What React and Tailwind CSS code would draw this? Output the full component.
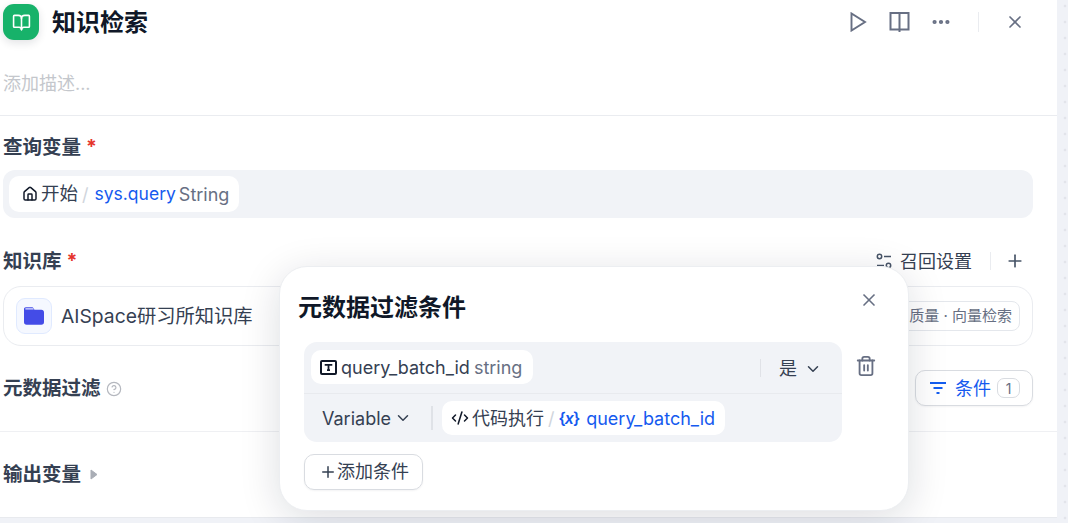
import React from 'react';
import { Ellipsis, X, House, Plus, ChevronDown, Trash2, CodeXml, CircleHelp, BookOpen } from 'lucide-react';

const font = { fontFamily: '"Inter","Noto Sans CJK SC",sans-serif' };

function Req() {
  return <span className="text-[#e5342b] ml-[5px]">*</span>;
}

function PlayIcon() {
  return (
    <svg width="20" height="20" viewBox="0 0 20 20" fill="none" className="shrink-0">
      <path d="M3.5 1.5v17L17 10z" stroke="#676f83" strokeWidth="1.9" strokeLinejoin="miter" />
    </svg>
  );
}

function DocIcon() {
  return (
    <svg width="23" height="22" viewBox="0 0 23 22" fill="none" className="shrink-0">
      <rect x="2.5" y="2" width="18" height="16.5" stroke="#676f83" strokeWidth="2" />
      <path d="M11.5 1v20" stroke="#676f83" strokeWidth="2" />
    </svg>
  );
}

function TextBoxIcon() {
  return (
    <svg width="17" height="15" viewBox="0 0 17 15" fill="none" className="shrink-0">
      <rect x="1" y="1" width="15" height="13" rx="1" stroke="#101828" strokeWidth="2" />
      <path d="M4.7 4.8h7.6M8.5 4.8v5.4M7 10.2h3" stroke="#101828" strokeWidth="1.8" />
    </svg>
  );
}

function RecallIcon() {
  return (
    <svg width="16" height="16" viewBox="0 0 16 16" fill="none" className="shrink-0">
      <circle cx="3.5" cy="3.5" r="2.2" stroke="#475467" strokeWidth="1.5" />
      <path d="M8 3.5h7M1 12.5h7" stroke="#475467" strokeWidth="1.7" />
      <circle cx="12.5" cy="12.5" r="2.2" stroke="#475467" strokeWidth="1.5" />
    </svg>
  );
}

function FolderIcon() {
  return (
    <svg width="22" height="20" viewBox="0 0 24 22" fill="none">
      <path d="M3 1.5h6.5c1 0 1.7.5 2.2 1.3l.8 1.4H20c2 0 3 1 3 3v10.3c0 2-1 3-3 3H4c-2 0-3-1-3-3V3.5c0-1.2.8-2 2-2z" fill="#444ce7" />
      <path d="M3 3.2h8" stroke="#dfe3ff" strokeWidth="1.3" strokeLinecap="round" />
    </svg>
  );
}

function FilterIcon() {
  return (
    <svg width="18" height="14" viewBox="0 0 18 14" fill="none" className="shrink-0">
      <path d="M1 2h16M4.5 7h9M7.5 12h3" stroke="#155eef" strokeWidth="2" />
    </svg>
  );
}

export default function App() {
  return (
    <div style={font} className="relative w-[1068px] h-[523px] overflow-hidden flex bg-[#f0f2f7]">
      <div className="w-[1057px] h-[518px] bg-white border-b border-[#e8eaee] flex flex-col shrink-0">
        <div className="h-[116px] border-b border-[#eaecf0] pl-[3px] pr-[32px] pt-[4px] shrink-0">
          <div className="flex items-center h-[36px]">
            <div className="w-[36px] h-[36px] rounded-[11px] bg-[#17b26a] flex items-center justify-center shadow-[0_3px_8px_rgba(16,24,40,0.12)]">
              <BookOpen size={19} color="white" strokeWidth={2} />
            </div>
            <div className="ml-[13px] mt-[2px] text-[24px] leading-[40px] font-bold text-[#101828]">知识检索</div>
            <div className="ml-auto flex items-center text-[#676f83]">
              <PlayIcon />
              <div className="ml-[20px]"><DocIcon /></div>
              <Ellipsis size={22} strokeWidth={2.6} className="ml-[19px]" />
              <div className="w-px h-[20px] bg-[#eaecf0] ml-[26px]" />
              <X size={20} strokeWidth={2} className="ml-[26px]" />
            </div>
          </div>
          <div className="mt-[30px] text-[18px] leading-[28px] text-[#c4c7cc]">添加描述...</div>
        </div>

        <div className="pl-[3px] pr-[24px] pt-[17px] shrink-0">
          <div className="h-[30px] flex items-center text-[19.5px] font-bold text-[#354052]">
            查询变量<Req />
          </div>
          <div className="mt-[7px] h-[48px] rounded-[12px] bg-[#f1f3f7] flex items-center px-[6px]">
            <div className="h-[36px] w-[230px] rounded-[10px] bg-white flex items-center pl-[13px] text-[18px] whitespace-nowrap">
              <House size={16} color="#101828" strokeWidth={2.2} className="shrink-0" />
              <span className="ml-[3px] text-[18.5px] text-[#354052]">开始</span>
              <span className="ml-[4px] text-[#d0d5dc]">/</span>
              <span className="ml-[6px] text-[17.5px] text-[#155aef]">sys.query</span>
              <span className="ml-[3px] text-[#676f83]">String</span>
            </div>
          </div>
        </div>

        <div className="pl-[3px] pr-[24px] pt-[29px] shrink-0">
          <div className="h-[30px] flex items-center">
            <div className="text-[19.5px] font-bold text-[#354052]">知识库<Req /></div>
            <div className="ml-auto mr-[8px] -mt-[2px] flex items-center text-[18px] text-[#354052]">
              <RecallIcon />
              <span className="ml-[8px]">召回设置</span>
              <div className="w-px h-[18px] bg-[#eaecf0] ml-[18px]" />
              <Plus size={20} color="#475467" strokeWidth={2} className="ml-[14px]" />
            </div>
          </div>
          <div className="mt-[9px] h-[60px] rounded-[18px] border border-[#eaecf0] flex items-center pl-[12px] pr-[12px]">
            <div className="w-[36px] h-[36px] rounded-[9px] border border-[#e0eaff] bg-[#f5f8ff] flex items-center justify-center">
              <FolderIcon />
            </div>
            <span className="ml-[9px] text-[19.3px] text-[#354052]">AISpace研习所知识库</span>
            <div className="ml-auto h-[30px] rounded-[8px] border border-[#e4e7ec] flex items-center justify-end px-[7px] text-[15px] text-[#676f83]">
              高质量 · 向量检索
            </div>
          </div>
        </div>

        <div className="pl-[3px] pr-[24px] pt-[24px] h-[86px] border-b border-[#eff0f3] shrink-0">
          <div className="flex items-center h-[36px]">
            <div className="mt-[2px] text-[19.5px] font-bold text-[#354052]">元数据过滤</div>
            <CircleHelp size={16} color="#b5b8bf" strokeWidth={1.8} className="ml-[5px] mt-[2px]" />
            <div className="ml-auto w-[118px] h-[36px] rounded-[10px] border border-[#d9dce1] flex items-center pl-[13px] text-[18px] text-[#155aef] shadow-[0_1px_2px_rgba(16,24,40,0.05)]">
              <FilterIcon />
              <span className="ml-[8px]">条件</span>
              <span className="ml-[6px] w-[23px] h-[20px] rounded-[7px] border border-[#d9dce1] flex items-center justify-center text-[14px] text-[#676f83]">1</span>
            </div>
          </div>
        </div>

        <div className="pl-[3px] flex items-center flex-1">
          <span className="text-[19.5px] font-bold text-[#354052]">输出变量</span>
          <svg width="8" height="11" viewBox="0 0 8 11" className="ml-[9px]"><path d="M1 1l6 4.5L1 10z" fill="#a9adb5" stroke="#a9adb5" strokeLinejoin="round" /></svg>
        </div>
      </div>

      <div className="flex-1 bg-[radial-gradient(circle,#e2e4ea_1.5px,transparent_1.6px)] bg-[length:16px_16px] bg-[position:0_-2px]" />

      <div className="absolute left-[279px] top-[266px] w-[630px] h-[245px] rounded-[28px] bg-white border border-[#eceef1] shadow-[0_8px_40px_rgba(16,24,40,0.14)]">
        <div className="pl-[18px] pt-[25px] pr-[29px] h-[75px] flex items-start justify-between">
          <div className="text-[24px] leading-[32px] font-bold text-[#101828]">元数据过滤条件</div>
          <X size={20} color="#676f83" strokeWidth={2} className="mt-[-2px]" />
        </div>
        <div className="pl-[24px] flex items-start">
          <div className="w-[538px] h-[100px] rounded-[13px] bg-[#f1f3f7]">
            <div className="h-[52px] border-b border-[#e8eaee] flex items-center pl-[7px] pr-[20px]">
              <div className="w-[222px] h-[34px] -mt-[1px] rounded-[10px] bg-white flex items-center pl-[9px] text-[18px] whitespace-nowrap">
                <TextBoxIcon />
                <span className="ml-[4px] text-[#354052]">query_batch_id</span>
                <span className="ml-[4px] text-[#676f83]">string</span>
              </div>
              <div className="ml-auto w-px h-[18px] bg-[#e0e2e7]" />
              <span className="ml-[18px] text-[18px] text-[#354052] mt-[2px]">是</span>
              <ChevronDown size={18} color="#354052" strokeWidth={2} className="ml-[7px] mt-[2px]" />
            </div>
            <div className="h-[48px] flex items-center pl-[18px] whitespace-nowrap">
              <span className="text-[18px] text-[#354052]">Variable</span>
              <ChevronDown size={18} color="#354052" strokeWidth={2} className="ml-[3px]" />
              <div className="w-[2px] h-[24px] bg-[#dfe2e7] ml-[19px]" />
              <div className="ml-[9px] w-[283px] h-[34px] rounded-[10px] bg-white flex items-center pl-[9px] text-[18px]">
                <CodeXml size={18} color="#101828" strokeWidth={2} className="shrink-0" />
                <span className="ml-[3px] text-[#354052]">代码执行</span>
                <span className="ml-[4px] text-[#d0d5dc]">/</span>
                <span className="ml-[4px] text-[16px] font-semibold tracking-[-1px] text-[#155aef]">{'{'}<i>x</i>{'}'}</span>
                <span className="ml-[7px] text-[#155aef]">query_batch_id</span>
              </div>
            </div>
          </div>
          <Trash2 size={22} color="#676f83" strokeWidth={2} className="ml-[13px] mt-[13px]" />
        </div>
        <div className="pl-[24px] mt-[12px]">
          <div className="w-[119px] h-[36px] rounded-[10px] border border-[#d9dce1] flex items-center pl-[14px] text-[18px] text-[#354052] shadow-[0_1px_2px_rgba(16,24,40,0.05)]">
            <Plus size={18} color="#354052" strokeWidth={2} />
            <span className="-mt-[2px]">添加条件</span>
          </div>
        </div>
      </div>
    </div>
  );
}
